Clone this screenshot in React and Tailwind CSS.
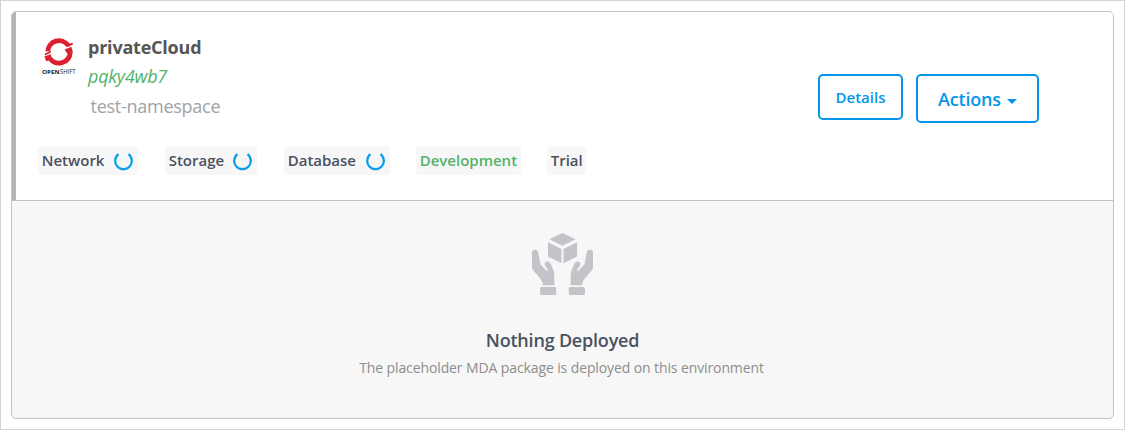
function Spinner() {
  return (
    <svg className="block h-5 w-5 shrink-0" viewBox="0 0 20 20" fill="none" stroke="#0f9fe8" strokeWidth="2.3">
      <path d="M4.5 3.2A8.3 8.3 0 1 0 14.5 3.2" />
    </svg>
  );
}

function OpenShiftLogo() {
  return (
    <svg className="block h-[38px] w-[34px]" viewBox="0 0 34 38">
      <g fill="none" stroke="#db212e" strokeWidth="4.8">
        <path d="M5.8 14.4A11.2 11.2 0 0 1 26 8.2" />
        <path d="M28.2 15.5A11.2 11.2 0 0 1 8.4 22" />
      </g>
      <g fill="#db212e">
        <path d="M23.2 7.8L30.9 5.8L30.6 7.7L25 10.2Z" />
        <path d="M22.6 12.6L29.3 9.8L31 15.6L25.2 16.6Z" />
        <path d="M2.4 19.6L8.7 17.2L10.4 22.2L4.2 24.2Z" />
        <path d="M2.6 16.8L8.8 13.8L8.6 15.7L3 18.5Z" />
      </g>
      <text x="0" y="37" fontFamily="Open Sans, sans-serif" fontSize="6" fontWeight="700" fill="#161616" textLength="17.5" lengthAdjust="spacingAndGlyphs">OPEN</text>
      <text x="18" y="37" fontFamily="Open Sans, sans-serif" fontSize="6.2" fill="#222" textLength="15.5" lengthAdjust="spacingAndGlyphs">SHIFT</text>
    </svg>
  );
}

function HandsIcon() {
  return (
    <svg className="mr-px block h-[62px] w-[61px]" viewBox="0 0 62 62" preserveAspectRatio="none" fill="#c2c4c9">
      <path d="M31 0L44.2 6.3L31 12.7L17.8 6.3Z" />
      <path d="M16.2 9.2L30 15.9V30.3L16.2 23.6Z" />
      <path d="M45.8 9.2L32 15.9V30.3L45.8 23.6Z" />
      <path id="hand" d="M0 19.2C0 16 5.5 15.8 6.2 18.8L8.8 31.5L14.5 37.4C15.7 38 16.5 37.4 16 36.2L13.6 33.4C12.2 31 13 28.8 15 28.5C17 28.2 18.4 29.6 19.3 31.5L21.6 37C22.4 39 22.7 41.2 22.7 43.5V52.2H11.2C10.8 48.5 9.5 46.8 7.5 44.4L1.8 38C.8 36.8 0 35.6 0 34Z" />
      <use href="#hand" transform="matrix(-1 0 0 1 62 0)" />
      <rect x="8.2" y="54" width="16.4" height="8" rx="1.5" />
      <rect x="37.4" y="54" width="16.4" height="8" rx="1.5" />
    </svg>
  );
}

function Chip({ label, loading, className }) {
  return (
    <span className={`flex h-[29px] items-center justify-between rounded-sm bg-[#f7f7f7] pr-1 pl-[3.7px] text-[15px] leading-[29px] font-[570] whitespace-nowrap ${className}`}>
      {label}
      {loading && <Spinner />}
    </span>
  );
}

export default function App() {
  return (
    <main className="h-[430px] w-[1125px] border border-[#d4d4d4] bg-white p-2.5 font-['Open_Sans',sans-serif]">
      <section className="flex h-[408px] w-[1103px] flex-col overflow-hidden rounded-[5px] border border-[#c2c2c4] bg-[#f7f7f7]">
        <header className="-ml-px flex h-[189px] shrink-0 justify-between border-b border-l-[5px] border-b-[#c2c2c4] border-l-[#b0b5ba] bg-white">
          <div className="pt-[25px] pl-[22px]">
            <div className="flex h-[109px] gap-3 pl-1">
              <OpenShiftLogo />
              <div className="whitespace-nowrap">
                <h1 className="-mt-1 h-[30px] text-[18px] leading-[28px] font-bold tracking-[-0.22px] text-[#555]">privateCloud</h1>
                <p className="h-[30px] text-[18px] leading-[26px] tracking-[-0.25px] text-[#50b368] italic">pqky4wb7</p>
                <p className="pl-[2.5px] text-[18px] leading-[26px] tracking-[-0.26px] text-[#a0a3aa]">test-namespace</p>
              </div>
            </div>
            <div className="flex text-[#4b5160]">
              <Chip label="Network" loading className="mr-[27px] w-[100px]" />
              <Chip label="Storage" loading className="mr-[27px] w-[92px]" />
              <Chip label="Database" loading className="mr-[26px] w-[106px]" />
              <Chip label="Development" className="mr-[26px] w-[105px] text-[#50b368]" />
              <Chip label="Trial" className="w-[39px]" />
            </div>
          </div>
          <div className="flex items-start gap-[13px] pt-[62px] pr-[74px] font-[570] text-[#0595eb]">
            <button className="h-[46px] w-[85px] rounded-[5px] border-2 border-[#0595eb] text-[15px]">Details</button>
            <button className="flex h-[49px] w-[123px] items-center justify-center gap-[6px] rounded-[5px] border-2 border-[#0595eb] pt-px text-[18px] tracking-[-0.2px]">
              Actions
              <svg className="mt-1 h-[5px] w-[10px]" viewBox="0 0 10 5" fill="currentColor">
                <path d="M0 0H10L5 5Z" />
              </svg>
            </button>
          </div>
        </header>
        <div className="flex flex-col items-center pt-8 whitespace-nowrap">
          <HandsIcon />
          <h2 className="mt-8 text-[18px] leading-[26px] font-[560] tracking-[-0.2px] text-[#4b5160]">Nothing Deployed</h2>
          <p className="mt-1 mr-[2px] text-sm leading-[22px] tracking-[-0.11px] text-[#8d8d8d]">The placeholder MDA package is deployed on this environment</p>
        </div>
      </section>
    </main>
  );
}
